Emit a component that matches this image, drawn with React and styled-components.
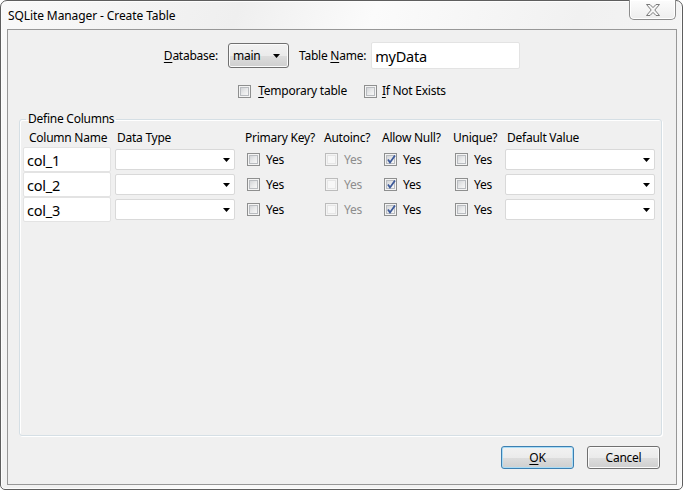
import React from "react";
import styled, { createGlobalStyle } from "styled-components";

const GlobalStyle = createGlobalStyle`
  html, body {
    margin: 0;
    padding: 0;
    background: #ffffff;
  }
  body {
    font-family: "Segoe UI", "Noto Sans", sans-serif;
    font-size: 12px;
    letter-spacing: -0.25px;
    color: #000;
  }
  * {
    box-sizing: border-box;
  }
`;

const Window = styled.div`
  width: 683px;
  height: 490px;
  display: flex;
  flex-direction: column;
  border: 1px solid #5e5e5e;
  border-radius: 7px 7px 5px 5px;
  padding: 0 5px 4px 6px;
  background: linear-gradient(
    110deg,
    #f9f9f9 0%,
    #efefef 28%,
    #fbfbfb 44%,
    #f1f1f1 68%,
    #f8f8f8 100%
  );
  box-shadow: inset 0 0 0 1px #fdfdfd;
`;

const TitleBar = styled.div`
  height: 28px;
  display: flex;
  justify-content: space-between;
  align-items: flex-start;
`;

const Title = styled.span`
  padding: 7px 0 0 1px;
  line-height: 16px;
  letter-spacing: -0.1px;
`;

const CloseBtn = styled.div`
  width: 47px;
  height: 20px;
  margin: -1px 1px 0 0;
  display: flex;
  align-items: center;
  justify-content: center;
  border: 1px solid #8c8c8c;
  border-top: none;
  border-radius: 0 0 5px 5px;
  background: linear-gradient(#fcfcfc, #eeeeee);
  box-shadow: inset 0 0 0 1px #ffffff;
`;

const Client = styled.div`
  flex: 1;
  display: flex;
  flex-direction: column;
  background: #f0f0f0;
  border: 1px solid #979797;
`;

const TopRow = styled.div`
  display: flex;
  justify-content: center;
  align-items: center;
  margin-top: ${(p) => p.$top}px;
  height: ${(p) => p.$height}px;
`;

const Label = styled.label`
  margin-left: ${(p) => p.$gap || 0}px;
  line-height: 16px;
  white-space: nowrap;
  color: ${(p) => (p.$disabled ? "#8d8d8d" : "#000")};
`;

const Key = styled.span`
  text-decoration: underline;
  text-underline-offset: 2px;
`;

const DbSelect = styled.div`
  width: 61px;
  height: 25px;
  margin-left: 10px;
  display: flex;
  align-items: center;
  justify-content: space-between;
  padding: 0 8px 0 4px;
  border: 1px solid #707070;
  border-radius: 3px;
  background: linear-gradient(#f2f2f2 0%, #ebebeb 50%, #dddddd 51%, #cfcfcf 100%);
  box-shadow: inset 0 0 0 1px #fbfbfb;
  line-height: 16px;
`;

const TextBox = styled.div`
  width: ${(p) => p.$width}px;
  height: ${(p) => p.$height}px;
  margin-left: ${(p) => p.$gap || 0}px;
  display: flex;
  align-items: center;
  padding-left: 3px;
  background: #ffffff;
  border: 1px solid #e3e3e3;
  border-radius: 2px;
  font-size: 14.5px;
  letter-spacing: -0.2px;
`;

const Check = styled.span`
  width: 13px;
  height: 13px;
  flex: none;
  display: inline-flex;
  align-items: center;
  justify-content: center;
  margin-left: ${(p) => p.$gap || 0}px;
  border: 1px solid ${(p) => (p.$disabled ? "#bcbcbc" : "#8e8f8f")};
  background: #f4f4f4;
  padding: 1px;
  position: relative;
`;

const CheckInner = styled.span`
  width: 100%;
  height: 100%;
  border: 1px solid ${(p) => (p.$disabled ? "#e6e6e6" : "#b9bcc0")};
  background: ${(p) =>
    p.$disabled
      ? "#f7f7f7"
      : "linear-gradient(135deg, #d3d5d8 0%, #e8e9ea 50%, #f7f7f7 100%)"};
`;

const Tick = styled.svg`
  position: absolute;
  left: 1px;
  top: 0px;
`;

const GroupBox = styled.fieldset`
  flex: 1;
  margin: 13px 14px 0 11px;
  padding: 0 3px;
  border: 1px solid #d5dfe5;
  border-radius: 3px;
  box-shadow: 1px 1px 0 #ffffff, inset 1px 1px 0 #ffffff;
  min-width: 0;
`;

const Legend = styled.legend`
  margin-left: 3px;
  padding: 0 2px;
  line-height: 14px;
`;

const ColumnsGrid = styled.div`
  display: grid;
  grid-template-columns: 92px 130px 79px 58px 71px 52px 150px;
  grid-template-rows: 20px;
  grid-auto-rows: 25px;
  align-items: center;
  margin-top: 1px;
`;

const HeadCell = styled.div`
  padding-left: ${(p) => p.$pad || 0}px;
  line-height: 16px;
  white-space: nowrap;
  align-self: end;
  margin-bottom: 1px;
`;

const DropDown = styled.div`
  width: ${(p) => p.$width}px;
  height: 21px;
  display: flex;
  align-items: center;
  justify-content: flex-end;
  padding-right: 4px;
  background: #ffffff;
  border: 1px solid #d9d9d9;
  border-radius: 2px;
`;

const CheckCell = styled.div`
  display: flex;
  align-items: center;
  padding-left: ${(p) => p.$pad || 0}px;
`;

const ButtonRow = styled.div`
  display: flex;
  justify-content: flex-end;
  gap: 13px;
  margin: 10px 16px 15px 0;
`;

const Button = styled.div`
  width: 73px;
  height: 23px;
  display: flex;
  align-items: center;
  justify-content: center;
  border: 1px solid ${(p) => (p.$default ? "#3c7fb1" : "#707070")};
  border-radius: 3px;
  background: linear-gradient(#f2f2f2 0%, #ebebeb 50%, #dddddd 51%, #cfcfcf 100%);
  box-shadow: inset 0 0 0 1px ${(p) => (p.$default ? "#a9dcf6" : "#fbfbfb")};
`;

const Arrow = () => (
  <svg width="7" height="4" viewBox="0 0 7 4">
    <polygon points="0,0 7,0 3.5,4" fill="#000" />
  </svg>
);

const CloseGlyph = () => (
  <svg width="14" height="12" viewBox="0 0 14 12">
    <polygon
      points="0.5,0.5 4,0.5 7,3.6 10,0.5 13.5,0.5 8.8,6 13.5,11.5 10,11.5 7,8.4 4,11.5 0.5,11.5 5.2,6"
      fill="#f6f6f6"
      stroke="#7a7a7a"
      strokeWidth="1"
      strokeLinejoin="round"
    />
  </svg>
);

const CheckBox = ({ checked, disabled, gap }) => (
  <Check $disabled={disabled} $gap={gap}>
    <CheckInner $disabled={disabled} />
    {checked && (
      <Tick width="11" height="11" viewBox="0 0 11 11">
        <path
          d="M2 5.5 L4 8.5 L9 1.5"
          fill="none"
          stroke="#3d5a99"
          strokeWidth="1.8"
        />
      </Tick>
    )}
  </Check>
);

const YesBox = ({ checked, disabled, pad }) => (
  <CheckCell $pad={pad}>
    <CheckBox checked={checked} disabled={disabled} />
    <Label $gap={6} $disabled={disabled}>
      Yes
    </Label>
  </CheckCell>
);

const rows = ["col_1", "col_2", "col_3"];

const App = () => {
  return (
    <>
      <GlobalStyle />
      <Window>
        <TitleBar>
          <Title>SQLite Manager - Create Table</Title>
          <CloseBtn>
            <CloseGlyph />
          </CloseBtn>
        </TitleBar>
        <Client>
          <TopRow $top={12} $height={27}>
            <Label>
              <Key>D</Key>atabase:
            </Label>
            <DbSelect>
              <span>main</span>
              <Arrow />
            </DbSelect>
            <Label $gap={10}>
              Table <Key>N</Key>ame:
            </Label>
            <TextBox $width={149} $height={27} $gap={5}>
              myData
            </TextBox>
          </TopRow>
          <TopRow $top={14} $height={16}>
            <CheckBox />
            <Label $gap={7}>
              <Key>T</Key>emporary table
            </Label>
            <CheckBox gap={17} />
            <Label $gap={5}>
              <Key>I</Key>f Not Exists
            </Label>
          </TopRow>
          <GroupBox>
            <Legend>Define Columns</Legend>
            <ColumnsGrid>
              <HeadCell $pad={6}>Column Name</HeadCell>
              <HeadCell $pad={2}>Data Type</HeadCell>
              <HeadCell $pad={0}>Primary Key?</HeadCell>
              <HeadCell>Autoinc?</HeadCell>
              <HeadCell>Allow Null?</HeadCell>
              <HeadCell>Unique?</HeadCell>
              <HeadCell $pad={2}>Default Value</HeadCell>
              {rows.map((name) => (
                <React.Fragment key={name}>
                  <TextBox $width={88} $height={25}>
                    {name}
                  </TextBox>
                  <DropDown $width={120}>
                    <Arrow />
                  </DropDown>
                  <YesBox pad={2} />
                  <YesBox pad={1} disabled />
                  <YesBox pad={2} checked />
                  <YesBox pad={2} />
                  <DropDown $width={150}>
                    <Arrow />
                  </DropDown>
                </React.Fragment>
              ))}
            </ColumnsGrid>
          </GroupBox>
          <ButtonRow>
            <Button $default>
              <span>
                <Key>O</Key>K
              </span>
            </Button>
            <Button>Cancel</Button>
          </ButtonRow>
        </Client>
      </Window>
    </>
  );
};

export default App;
